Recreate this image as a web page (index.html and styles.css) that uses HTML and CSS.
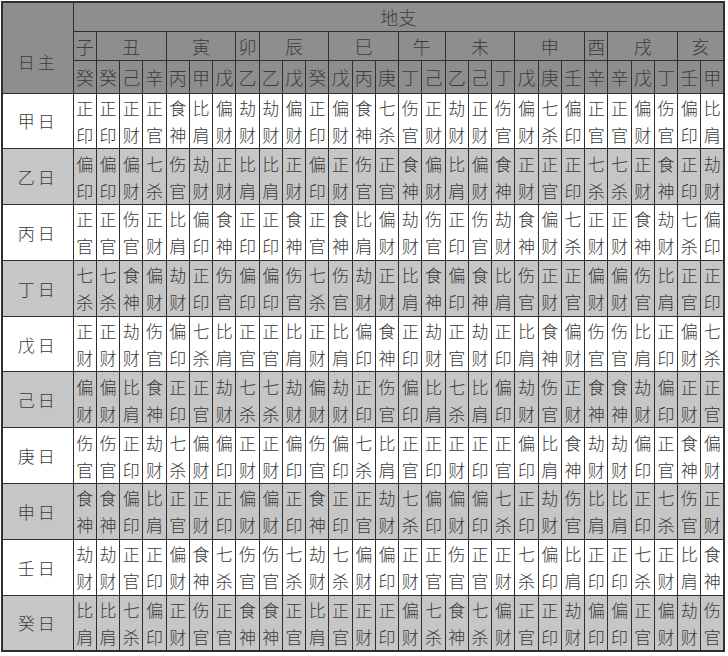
FILE: index.html
```html
<!DOCTYPE html>
<html lang="zh">
<head>
<meta charset="utf-8">
<title>十神表</title>
<link rel="stylesheet" href="styles.css">
</head>
<body>
<table class="tbl">
<colgroup><col class="c0"><col span="28"></colgroup>
<thead>
<tr class="h1"><th class="hd corner" rowspan="3"><span>日主</span></th><th class="hd" colspan="28">地支</th></tr>
<tr class="h2"><th class="hd">子</th><th class="hd" colspan="3">丑</th><th class="hd" colspan="3">寅</th><th class="hd">卯</th><th class="hd" colspan="3">辰</th><th class="hd" colspan="3">巳</th><th class="hd" colspan="2">午</th><th class="hd" colspan="3">未</th><th class="hd" colspan="3">申</th><th class="hd">酉</th><th class="hd" colspan="3">戌</th><th class="hd" colspan="2">亥</th></tr>
<tr class="h3"><th class="hd">癸</th><th class="hd">癸</th><th class="hd">己</th><th class="hd">辛</th><th class="hd">丙</th><th class="hd">甲</th><th class="hd">戊</th><th class="hd">乙</th><th class="hd">乙</th><th class="hd">戊</th><th class="hd">癸</th><th class="hd">戊</th><th class="hd">丙</th><th class="hd">庚</th><th class="hd">丁</th><th class="hd">己</th><th class="hd">乙</th><th class="hd">己</th><th class="hd">丁</th><th class="hd">戊</th><th class="hd">庚</th><th class="hd">壬</th><th class="hd">辛</th><th class="hd">辛</th><th class="hd">戊</th><th class="hd">丁</th><th class="hd">壬</th><th class="hd">甲</th></tr>
</thead>
<tbody>
<tr><th class="rh">甲日</th><td>正<br>印</td><td>正<br>印</td><td>正<br>财</td><td>正<br>官</td><td>食<br>神</td><td>比<br>肩</td><td>偏<br>财</td><td>劫<br>财</td><td>劫<br>财</td><td>偏<br>财</td><td>正<br>印</td><td>偏<br>财</td><td>食<br>神</td><td>七<br>杀</td><td>伤<br>官</td><td>正<br>财</td><td>劫<br>财</td><td>正<br>财</td><td>伤<br>官</td><td>偏<br>财</td><td>七<br>杀</td><td>偏<br>印</td><td>正<br>官</td><td>正<br>官</td><td>偏<br>财</td><td>伤<br>官</td><td>偏<br>印</td><td>比<br>肩</td></tr>
<tr><th class="rh">乙日</th><td>偏<br>印</td><td>偏<br>印</td><td>偏<br>财</td><td>七<br>杀</td><td>伤<br>官</td><td>劫<br>财</td><td>正<br>财</td><td>比<br>肩</td><td>比<br>肩</td><td>正<br>财</td><td>偏<br>印</td><td>正<br>财</td><td>伤<br>官</td><td>正<br>官</td><td>食<br>神</td><td>偏<br>财</td><td>比<br>肩</td><td>偏<br>财</td><td>食<br>神</td><td>正<br>财</td><td>正<br>官</td><td>正<br>印</td><td>七<br>杀</td><td>七<br>杀</td><td>正<br>财</td><td>食<br>神</td><td>正<br>印</td><td>劫<br>财</td></tr>
<tr><th class="rh">丙日</th><td>正<br>官</td><td>正<br>官</td><td>伤<br>官</td><td>正<br>财</td><td>比<br>肩</td><td>偏<br>印</td><td>食<br>神</td><td>正<br>印</td><td>正<br>印</td><td>食<br>神</td><td>正<br>官</td><td>食<br>神</td><td>比<br>肩</td><td>偏<br>财</td><td>劫<br>财</td><td>伤<br>官</td><td>正<br>印</td><td>伤<br>官</td><td>劫<br>财</td><td>食<br>神</td><td>偏<br>财</td><td>七<br>杀</td><td>正<br>财</td><td>正<br>财</td><td>食<br>神</td><td>劫<br>财</td><td>七<br>杀</td><td>偏<br>印</td></tr>
<tr><th class="rh">丁日</th><td>七<br>杀</td><td>七<br>杀</td><td>食<br>神</td><td>偏<br>财</td><td>劫<br>财</td><td>正<br>印</td><td>伤<br>官</td><td>偏<br>印</td><td>偏<br>印</td><td>伤<br>官</td><td>七<br>杀</td><td>伤<br>官</td><td>劫<br>财</td><td>正<br>财</td><td>比<br>肩</td><td>食<br>神</td><td>偏<br>印</td><td>食<br>神</td><td>比<br>肩</td><td>伤<br>官</td><td>正<br>财</td><td>正<br>官</td><td>偏<br>财</td><td>偏<br>财</td><td>伤<br>官</td><td>比<br>肩</td><td>正<br>官</td><td>正<br>印</td></tr>
<tr><th class="rh">戊日</th><td>正<br>财</td><td>正<br>财</td><td>劫<br>财</td><td>伤<br>官</td><td>偏<br>印</td><td>七<br>杀</td><td>比<br>肩</td><td>正<br>官</td><td>正<br>官</td><td>比<br>肩</td><td>正<br>财</td><td>比<br>肩</td><td>偏<br>印</td><td>食<br>神</td><td>正<br>印</td><td>劫<br>财</td><td>正<br>官</td><td>劫<br>财</td><td>正<br>印</td><td>比<br>肩</td><td>食<br>神</td><td>偏<br>财</td><td>伤<br>官</td><td>伤<br>官</td><td>比<br>肩</td><td>正<br>印</td><td>偏<br>财</td><td>七<br>杀</td></tr>
<tr><th class="rh">己日</th><td>偏<br>财</td><td>偏<br>财</td><td>比<br>肩</td><td>食<br>神</td><td>正<br>印</td><td>正<br>官</td><td>劫<br>财</td><td>七<br>杀</td><td>七<br>杀</td><td>劫<br>财</td><td>偏<br>财</td><td>劫<br>财</td><td>正<br>印</td><td>伤<br>官</td><td>偏<br>印</td><td>比<br>肩</td><td>七<br>杀</td><td>比<br>肩</td><td>偏<br>印</td><td>劫<br>财</td><td>伤<br>官</td><td>正<br>财</td><td>食<br>神</td><td>食<br>神</td><td>劫<br>财</td><td>偏<br>印</td><td>正<br>财</td><td>正<br>官</td></tr>
<tr><th class="rh">庚日</th><td>伤<br>官</td><td>伤<br>官</td><td>正<br>印</td><td>劫<br>财</td><td>七<br>杀</td><td>偏<br>财</td><td>偏<br>印</td><td>正<br>财</td><td>正<br>财</td><td>偏<br>印</td><td>伤<br>官</td><td>偏<br>印</td><td>七<br>杀</td><td>比<br>肩</td><td>正<br>官</td><td>正<br>印</td><td>正<br>财</td><td>正<br>印</td><td>正<br>官</td><td>偏<br>印</td><td>比<br>肩</td><td>食<br>神</td><td>劫<br>财</td><td>劫<br>财</td><td>偏<br>印</td><td>正<br>官</td><td>食<br>神</td><td>偏<br>财</td></tr>
<tr><th class="rh">申日</th><td>食<br>神</td><td>食<br>神</td><td>偏<br>印</td><td>比<br>肩</td><td>正<br>官</td><td>正<br>财</td><td>正<br>印</td><td>偏<br>财</td><td>偏<br>财</td><td>正<br>印</td><td>食<br>神</td><td>正<br>印</td><td>正<br>官</td><td>劫<br>财</td><td>七<br>杀</td><td>偏<br>印</td><td>偏<br>财</td><td>偏<br>印</td><td>七<br>杀</td><td>正<br>印</td><td>劫<br>财</td><td>伤<br>官</td><td>比<br>肩</td><td>比<br>肩</td><td>正<br>印</td><td>七<br>杀</td><td>伤<br>官</td><td>正<br>财</td></tr>
<tr><th class="rh">壬日</th><td>劫<br>财</td><td>劫<br>财</td><td>正<br>官</td><td>正<br>印</td><td>偏<br>财</td><td>食<br>神</td><td>七<br>杀</td><td>伤<br>官</td><td>伤<br>官</td><td>七<br>杀</td><td>劫<br>财</td><td>七<br>杀</td><td>偏<br>财</td><td>偏<br>印</td><td>正<br>财</td><td>正<br>官</td><td>伤<br>官</td><td>正<br>官</td><td>正<br>财</td><td>七<br>杀</td><td>偏<br>印</td><td>比<br>肩</td><td>正<br>印</td><td>正<br>印</td><td>七<br>杀</td><td>正<br>财</td><td>比<br>肩</td><td>食<br>神</td></tr>
<tr><th class="rh">癸日</th><td>比<br>肩</td><td>比<br>肩</td><td>七<br>杀</td><td>偏<br>印</td><td>正<br>财</td><td>伤<br>官</td><td>正<br>官</td><td>食<br>神</td><td>食<br>神</td><td>正<br>官</td><td>比<br>肩</td><td>正<br>官</td><td>正<br>财</td><td>正<br>印</td><td>偏<br>财</td><td>七<br>杀</td><td>食<br>神</td><td>七<br>杀</td><td>偏<br>财</td><td>正<br>官</td><td>正<br>印</td><td>劫<br>财</td><td>偏<br>印</td><td>偏<br>印</td><td>正<br>官</td><td>偏<br>财</td><td>劫<br>财</td><td>伤<br>官</td></tr>
</tbody>
</table>
</body>
</html>
```
FILE: styles.css
```css
html, body {
  margin: 0;
  padding: 0;
  background: #ffffff;
}
body {
  padding: 1px 0 0 1px;
  font-family: "Noto Sans CJK SC", "Noto Sans CJK TC", sans-serif;
}
.tbl {
  border-collapse: collapse;
  table-layout: fixed;
  width: 724px;
  border: 2px solid #2e2e2e;
  color: #3a3a3a;
}
.c0 {
  width: 71px;
}
.tbl th, .tbl td {
  border: 1px solid #2e2e2e;
  padding: 0;
  text-align: center;
  font-weight: 300;
  font-size: 17px;
  overflow: hidden;
}
.tbl thead th {
  font-size: 18px;
}
.hd {
  background: #8e8e8e;
  color: #3c3c3c;
}
.h1 { height: 29px; }
.h2 { height: 29px; }
.h3 { height: 33px; }
.corner span {
  display: inline-block;
  padding-top: 28px;
  letter-spacing: 3px;
  font-size: 17px;
}
.tbl td {
  line-height: 27px;
}
.tbl tbody tr {
  height: 55.8px;
}
.tbl tbody tr:nth-child(even) th,
.tbl tbody tr:nth-child(even) td {
  background: #c6c6c6;
}
.rh {
  letter-spacing: 3px;
  background: #ffffff;
}
```
